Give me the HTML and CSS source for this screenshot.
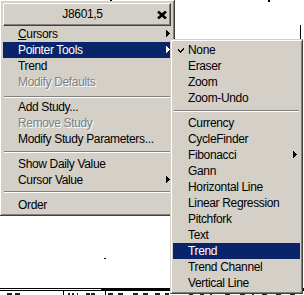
FILE: index.html
```html
<!DOCTYPE html>
<html>
<head>
<meta charset="utf-8">
<link rel="stylesheet" href="styles.css">
</head>
<body>
<div class="chart">
  <i class="mark tick-a"></i>
  <i class="mark tick-b"></i>
  <i class="mark vline-top"></i>
  <i class="mark rule r1"></i>
  <i class="mark rule r2"></i>
  <i class="mark rule r3"></i>
  <i class="mark dot"></i>
  <i class="mark vcut v1"></i>
  <i class="mark vcut v2"></i>
  <div class="glyph-row">
    <i style="left:7px;width:5px"></i><i style="left:15px;width:5px"></i>
    <i style="left:68px;width:2px"></i><i style="left:72px;width:2px"></i><i style="left:77px;width:1px"></i>
    <i style="left:86px;width:4px"></i><i style="left:91px;width:4px"></i>
    <i style="left:108px;width:5px"></i><i style="left:118px;width:5px"></i>
    <i style="left:133px;width:5px"></i><i style="left:143px;width:5px"></i>
    <i style="left:155px;width:5px"></i><i style="left:165px;width:4px"></i>
    <i style="left:189px;width:4px"></i><i style="left:200px;width:4px"></i>
    <i style="left:210px;width:2px"></i><i style="left:225px;width:5px"></i>
    <i style="left:240px;width:5px"></i><i style="left:252px;width:2px"></i>
    <i style="left:262px;width:5px"></i><i style="left:276px;width:5px"></i>
    <i style="left:290px;width:5px"></i>
  </div>
</div>

<div class="menu main-menu">
  <div class="title">
    <span class="title-text">J8601,5</span>
    <svg class="close" width="10" height="8" viewBox="0 0 10 8"><path d="M1 0.5 L9 7.5 M9 0.5 L1 7.5" stroke="#000" stroke-width="2.6" fill="none"/></svg>
  </div>
  <div class="item"><span><u>C</u>ursors</span><svg class="arrow" width="4" height="7"><rect x="0" y="0" width="1" height="7"/><rect x="1" y="1" width="1" height="5"/><rect x="2" y="2" width="1" height="3"/><rect x="3" y="3" width="1" height="1"/></svg></div>
  <div class="item active"><span>Pointer Tools</span><svg class="arrow" width="4" height="7"><rect x="0" y="0" width="1" height="7"/><rect x="1" y="1" width="1" height="5"/><rect x="2" y="2" width="1" height="3"/><rect x="3" y="3" width="1" height="1"/></svg></div>
  <div class="item"><span>Trend</span></div>
  <div class="item disabled"><span>Modify Defaults</span></div>
  <div class="sep sep-low"></div>
  <div class="item"><span>Add Study...</span></div>
  <div class="item disabled"><span>Remove Study</span></div>
  <div class="item"><span>Modify Study Parameters...</span></div>
  <div class="sep"></div>
  <div class="item"><span>Show Daily Value</span></div>
  <div class="item"><span>Cursor Value</span><svg class="arrow" width="4" height="7"><rect x="0" y="0" width="1" height="7"/><rect x="1" y="1" width="1" height="5"/><rect x="2" y="2" width="1" height="3"/><rect x="3" y="3" width="1" height="1"/></svg></div>
  <div class="sep sep-high"></div>
  <div class="item"><span>Order</span></div>
</div>

<div class="menu sub-menu">
  <div class="item checked"><svg class="check" width="6" height="5"><rect x="5" y="0" width="1" height="2"/><rect x="4" y="1" width="1" height="2"/><rect x="0" y="1" width="1" height="2"/><rect x="1" y="2" width="1" height="2"/><rect x="3" y="2" width="1" height="2"/><rect x="2" y="3" width="1" height="2"/></svg><span>None</span></div>
  <div class="item"><span>Eraser</span></div>
  <div class="item"><span>Zoom</span></div>
  <div class="item"><span>Zoom-Undo</span></div>
  <div class="sep"></div>
  <div class="item"><span>Currency</span></div>
  <div class="item"><span>CycleFinder</span></div>
  <div class="item"><span>Fibonacci</span><svg class="arrow arrow-sub" width="4" height="7"><rect x="0" y="0" width="1" height="7"/><rect x="1" y="1" width="1" height="5"/><rect x="2" y="2" width="1" height="3"/><rect x="3" y="3" width="1" height="1"/></svg></div>
  <div class="item"><span>Gann</span></div>
  <div class="item"><span>Horizontal Line</span></div>
  <div class="item"><span>Linear Regression</span></div>
  <div class="item"><span>Pitchfork</span></div>
  <div class="item"><span>Text</span></div>
  <div class="item active"><span>Trend</span></div>
  <div class="item"><span>Trend Channel</span></div>
  <div class="item"><span>Vertical Line</span></div>
</div>
</body>
</html>
```

FILE: styles.css
```css
html, body {
  margin: 0;
  padding: 0;
  background: #ffffff;
  overflow: hidden;
}
body {
  width: 304px;
  height: 295px;
  position: relative;
  font-family: "Liberation Sans", Arial, sans-serif;
  font-size: 12px;
  letter-spacing: -0.35px;
  color: #000;
}

/* chart canvas behind the menus */
.chart {
  position: absolute;
  inset: 0;
  background: #fff;
}
.mark {
  position: absolute;
  display: block;
  background: #000;
}
.tick-a { left: 110px; top: 0; width: 2px; height: 1px; z-index: 5; }
.tick-b { left: 268px; top: 0; width: 2px; height: 2px; }
.vline-top { left: 300px; top: 25px; width: 1px; height: 14px; }
.rule { left: 0; width: 304px; height: 1px; }
.r1 { top: 288px; }
.r2 { top: 289px; left: 101px; width: 203px; }
.r3 { top: 290px; }
.dot { left: 104px; top: 258px; width: 2px; height: 1px; }
.vcut { top: 291px; width: 1px; height: 4px; }
.v1 { left: 63px; }
.v2 { left: 105px; }
.glyph-row i {
  position: absolute;
  top: 293px;
  height: 2px;
  background: #222;
}

/* classic menus */
.menu {
  position: absolute;
  background: #d4d0c8;
  border: 1px solid;
  border-color: #d4d0c8 #404040 #404040 #d4d0c8;
  box-shadow: inset 1px 1px #ffffff, inset -1px -1px #808080;
  display: flex;
  flex-direction: column;
  box-sizing: border-box;
}
.main-menu {
  left: -1px;
  top: -1px;
  width: 176px;
  padding: 3px 3px 2px 3px;
  z-index: 1;
}
.sub-menu {
  left: 170px;
  top: 39px;
  width: 133px;
  padding: 2px;
  z-index: 2;
}

.title {
  height: 23px;
  box-sizing: border-box;
  border: 1px solid;
  border-color: #ffffff #404040 #404040 #ffffff;
  box-shadow: inset -1px -1px #808080;
  display: grid;
  grid-template-columns: 1fr 10px;
  padding: 0 3px 0 4px;
  line-height: 21px;
}
.title-text {
  text-align: center;
}
.close {
  display: block;
  margin-top: 7px;
}

.item {
  height: 16px;
  line-height: 16px;
  padding-left: 15px;
  display: flex;
  align-items: flex-start;
  justify-content: space-between;
  white-space: nowrap;
  position: relative;
}
.item u {
  text-decoration: underline;
  text-underline-offset: 1px;
}
.item.active {
  background: #0a246a;
  color: #ffffff;
}
.item.disabled {
  color: #808080;
  text-shadow: 1px 1px 0 #ffffff;
}
.arrow {
  display: block;
  margin-top: 4px;
  margin-right: 1px;
  fill: currentColor;
}
.arrow-sub {
  margin-right: 3px;
}
.check {
  position: absolute;
  left: 5px;
  top: 6px;
  fill: #000;
}

.sep {
  height: 9px;
  box-sizing: border-box;
  padding-top: 4px;
  margin: 0 1px;
}
.sep::before {
  content: "";
  display: block;
  height: 1px;
  background: #808080;
  border-bottom: 1px solid #ffffff;
}
.sep-low { padding-top: 6px; }
.sep-high { padding-top: 3px; }
```
